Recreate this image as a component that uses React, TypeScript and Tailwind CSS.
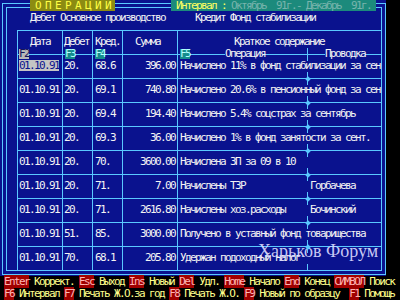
import React from "react";

// DOS-style accounting journal screen
const LINE = "border-[#5ac8ff]";

type Row = { date: string; deb: string; kr: string; sum: string; op: string; pr?: string };

const rows: Row[] = [
  { date: "01.10.91", deb: "20.", kr: "68.6", sum: "396.00", op: "Начислено 11% в фонд стабилизации за сен" },
  { date: "01.10.91", deb: "20.", kr: "69.1", sum: "740.80", op: "Начислено 20.6% в пенсионный фонд за сен" },
  { date: "01.10.91", deb: "20.", kr: "69.4", sum: "194.40", op: "Начислено 5.4% соцстрах за сентябрь" },
  { date: "01.10.91", deb: "20.", kr: "69.3", sum: "36.00", op: "Начислено 1% в фонд занятости за сент." },
  { date: "01.10.91", deb: "20.", kr: "70.", sum: "3600.00", op: "Начислена ЗП за 09 в 10" },
  { date: "01.10.91", deb: "20.", kr: "71.", sum: "7.00", op: "Начислены ТЗР", pr: "Горбачева" },
  { date: "01.10.91", deb: "20.", kr: "71.", sum: "2616.80", op: "Начислены хоз.расходы", pr: "Бочинский" },
  { date: "01.10.91", deb: "51.", kr: "85.", sum: "3000.00", op: "Получено в уставный фонд товарищества" },
  { date: "01.10.91", deb: "70.", kr: "68.1", sum: "205.80", op: "Удержан подоходный налог" },
];

const keys1 = [
  ["Enter", "Коррект."],
  ["Esc", "Выход"],
  ["Ins", "Новый"],
  ["Del", "Удл."],
  ["Home", "Начало"],
  ["End", "Конец"],
  ["СИМВОЛ", "Поиск"],
];
const keys2 = [
  ["F6", "Интервал"],
  ["F7", "Печать Ж.О.за год"],
  ["F8", "Печать Ж.О."],
  ["F9", "Новый по образцу "],
  ["F1", "Помощь"],
];

function Mark({ diamond = true, up = false }: { diamond?: boolean; up?: boolean }) {
  return (
    <div
      className={
        up
          ? "absolute left-[127px] bottom-0 w-[5px] h-[6px]"
          : "absolute left-[127px] -bottom-[7px] w-[5px] h-[13px] flex items-center justify-center z-10"
      }
    >
      <div className="absolute left-[2px] top-0 h-full w-px bg-[#5ac8ff]" />
      {diamond && <div className="w-[4px] h-[4px] rotate-45 bg-[#5ac8ff]" />}
    </div>
  );
}

function FKey({ label, grey = false }: { label: string; grey?: boolean }) {
  return (
    <span
      className={
        grey
          ? "absolute left-[1px] -bottom-[5px] h-[10px] leading-[10px] bg-[#b8b8b8] text-[#14145a]"
          : "absolute left-[2px] -bottom-[5px] h-[10px] leading-[10px] bg-[#168c8c] text-[#b4ffff]"
      }
    >
      {label}
    </span>
  );
}

function KeyLine({ items }: { items: string[][] }) {
  return (
    <div className="h-[12px] leading-[12px] whitespace-pre">
      {items.map(([k, l], i) => (
        <React.Fragment key={k}>
          <span className="bg-[#a00000] text-[#ffb4b4]">{k}</span>
          <span className="text-[#ffff8c]">{" " + l + (i < items.length - 1 ? " " : "")}</span>
        </React.Fragment>
      ))}
    </div>
  );
}

export default function App() {
  return (
    <div className="relative w-[400px] h-[300px] bg-black flex flex-col overflow-hidden font-['DejaVu_Sans_Mono','Liberation_Mono',monospace] text-[11px] leading-[12px] tracking-[-1.62px] text-[#f4f4f4]">
      <div className="h-[276px] flex shrink-0">
        <div className="w-[386px] bg-[#0a128e] pt-[3px] pl-[2px]">
          {/* outer frame */}
          <div className={`w-[384px] h-[272px] border ${LINE} p-[3px]`}>
            {/* inner frame */}
            <div className={`h-full border ${LINE} flex flex-col`}>
              <div className="mt-[4px] h-[12px] pl-[23px] whitespace-pre">
                {"Дебет Основное производство      Кредит Фонд стабилизации"}
              </div>

              {/* table */}
              <div className={`mt-[6px] ml-[10px] border-l border-t ${LINE} flex flex-col`}>
                {/* header */}
                <div className={`h-[24px] flex border-b ${LINE}`}>
                  <div className={`relative w-[45px] border-r ${LINE} pl-[12px] pt-[5px]`}>
                    Дата
                    <FKey label="F2" grey />
                  </div>
                  <div className={`relative w-[30px] border-r ${LINE} pl-[1px] pt-[5px]`}>
                    Дебет
                    <FKey label="F3" />
                  </div>
                  <div className={`relative w-[30px] border-r ${LINE} pl-[2px] pt-[5px]`}>
                    Кред.
                    <FKey label="F4" />
                  </div>
                  <div className={`relative w-[55px] border-r ${LINE} pl-[12px] pt-[5px]`}>
                    Сумма
                  </div>
                  <div className="relative flex-1 pl-[56px] pt-[5px] whitespace-pre">
                    Краткое содержание
                    <FKey label="F5" />
                    <span className="absolute left-[47px] -bottom-[6px] bg-[#0a128e]">Операция</span>
                    <span className="absolute left-[147px] -bottom-[6px] bg-[#0a128e]">Проводка</span>
                    <Mark diamond={false} />
                  </div>
                </div>

                {rows.map((r, i) => {
                  const last = i === rows.length - 1;
                  return (
                    <div
                      key={i}
                      className={last ? "h-[23px] flex" : `h-[24px] flex border-b ${LINE}`}
                    >
                      <div className={`w-[45px] border-r ${LINE} pl-[1px] pt-[5px]`}>
                        <span className={i === 0 ? "inline-block h-[11px] bg-[#c4c4c4] text-[#0a128e]" : ""}>
                          {r.date}
                        </span>
                      </div>
                      <div className={`w-[30px] border-r ${LINE} pl-[1px] pt-[5px]`}>{r.deb}</div>
                      <div className={`w-[30px] border-r ${LINE} pl-[2px] pt-[5px]`}>{r.kr}</div>
                      <div className={`w-[55px] border-r ${LINE} pr-[2px] pt-[5px] text-right`}>{r.sum}</div>
                      <div className="relative flex-1 pl-[2px] pt-[5px] whitespace-pre">
                        {r.pr ? r.op.padEnd(26, " ") + r.pr : r.op}
                        {last ? <Mark diamond={false} up /> : <Mark />}
                      </div>
                    </div>
                  );
                })}
              </div>
            </div>
          </div>
        </div>
        <div className="flex-1 bg-black" />
      </div>

      {/* key help */}
      <div className="h-[24px] pl-[4px] bg-black">
        <KeyLine items={keys1} />
        <KeyLine items={keys2} />
      </div>

      {/* window titles sitting on the top frame line */}
      <div className="absolute left-[30px] top-0 h-[11px] leading-[11px] bg-[#8c8c12] text-[#ffff44] whitespace-pre">
        {" О П Е Р А Ц И И "}
      </div>
      <div className="absolute left-[171px] top-0 h-[11px] leading-[11px] bg-[#1c8a7c] whitespace-pre">
        <span className="text-[#ffff60]">{" Интервал : "}</span>
        <span className="text-[#78b4ac]">{"Октябрь  91г.- Декабрь  91г. "}</span>
      </div>

      {/* watermark */}
      <div className="absolute left-[258px] top-[240px] font-['Liberation_Serif',serif] text-[18px] leading-[22px] tracking-normal text-[#dcdcff] opacity-90">
        Харьков Форум
      </div>
    </div>
  );
}
